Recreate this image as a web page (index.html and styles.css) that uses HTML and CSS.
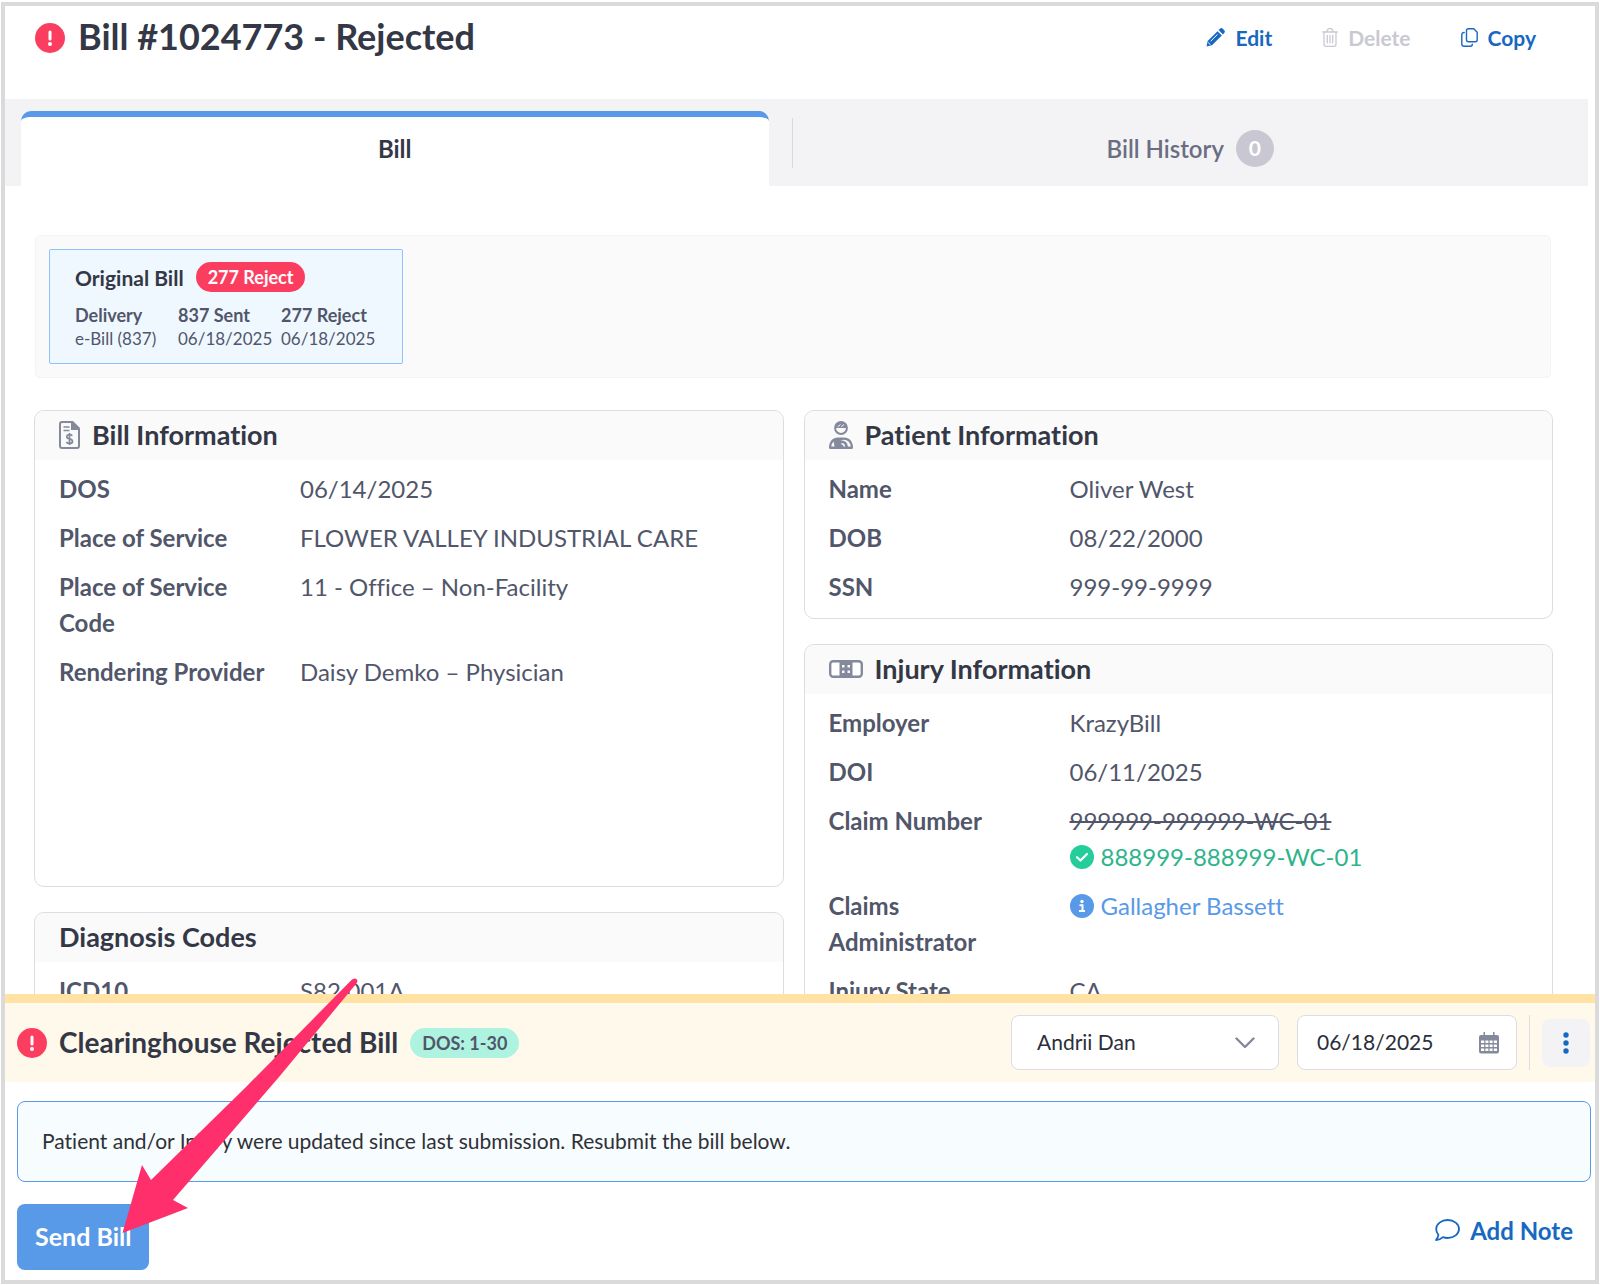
FILE: index.html
```html
<!DOCTYPE html>
<html lang="en">
<head>
    <meta charset="UTF-8">
    <meta name="viewport" content="width=device-width, initial-scale=1.0">
    <title>Bill #1024773 - Rejected</title>
    <link rel="stylesheet" href="styles.css">
</head>
<body>

    <div class="page">
        <header class="page-header">
            <svg class="alert-icon" viewBox="0 0 30 30">
                <circle cx="15" cy="15" r="15" fill="#fb3e5f"/>
                <path d="M15 9v7" stroke="#fff" stroke-width="3" stroke-linecap="round"/>
                <circle cx="15" cy="21" r="2" fill="#fff"/>
            </svg>
            <h1>Bill #1024773 - Rejected</h1>
            <div class="header-actions">
                <button type="button" class="link-btn">
                    <svg width="19" height="19" viewBox="0 0 19 19" fill="currentColor">
                        <path d="M11.500 3.200 15.800 7.500 6 17.200 0.500 18.500 1.700 12.900z"/>
                        <path d="M12.600 2.100 14 .8a2 2 0 0 1 2.800 0l1.400 1.400a2 2 0 0 1 0 2.800L16.900 6.400z"/>
                        <path d="M4.700 13.200 11.600 6.300M2.200 14.500l2.300 2.300" stroke="#fff" stroke-width="1"/>
                    </svg>
                    Edit
                </button>
                <button type="button" class="link-btn" disabled>
                    <svg width="16" height="19" viewBox="0 0 16 19" fill="none" stroke="currentColor" stroke-width="1.300" stroke-linecap="round">
                        <path d="M.7 4h14.600M4.500 4l1.300-2.500q.4-.8 1.200-.8h2q.8 0 1.200.8L11.500 4M2 4v12.300q0 2 2 2h8q2 0 2-2V4M5.300 7.300v7.500M8 7.300v7.500M10.700 7.300v7.500"/>
                    </svg>
                    Delete
                </button>
                <button type="button" class="link-btn">
                    <svg width="17" height="19" viewBox="0 0 17 19" fill="none" stroke="currentColor" stroke-width="1.400" stroke-linecap="round">
                        <path d="M7.500.8h5.200l3.500 3.400v7.600q0 2-2 2H7.500q-2 0-2-2v-9q0-2 2-2z"/>
                        <path d="M3.200 4.500q-2.400 0-2.400 2.200v9.200q0 2.300 2.300 2.300h6q2.200 0 2.200-2"/>
                    </svg>
                    Copy
                </button>
            </div>
        </header>

        <main class="content">
            <nav class="tabs">
                <a href="#bill" class="tab active">Bill</a>
                <span class="tab-divider"></span>
                <a href="#history" class="tab">Bill History <span class="count">0</span></a>
            </nav>

            <!-- Submissions of this bill -->
            <section class="submissions">
                <div class="submission">
                    <h3>Original Bill <span class="badge badge-reject">277 Reject</span></h3>
                    <dl class="submission-dates">
                        <div><dt>Delivery</dt><dd>e-Bill (837)</dd></div>
                        <div><dt>837 Sent</dt><dd>06/18/2025</dd></div>
                        <div><dt>277 Reject</dt><dd>06/18/2025</dd></div>
                    </dl>
                </div>
            </section>

            <div class="columns">
                <div class="column">
                    <section class="card card-bill">
                        <h2>
                            <svg width="21" height="28" viewBox="0 0 21 28" fill="none" stroke="#85899c" stroke-width="2">
                                <path d="M3 1h10.500L20 7.500V25q0 2-2 2H3q-2 0-2-2V3q0-2 2-2z"/>
                                <path d="M13 1v7h7z" fill="#85899c"/>
                                <path d="M4.500 6h6M4.500 9.500h6" stroke-width="1.500"/>
                                <path d="M13.300 14.800q-1-1.100-2.800-1.100-2.700 0-2.700 2 0 1.600 2.700 2.200 3 .6 3 2.500 0 2-3 2-2 0-3.200-1.300M10.500 12v12" stroke-width="1.700"/>
                            </svg>
                            Bill Information
                        </h2>
                        <dl class="fields">
                            <dt>DOS</dt>
                            <dd>06/14/2025</dd>
                            <dt>Place of Service</dt>
                            <dd>FLOWER VALLEY INDUSTRIAL CARE</dd>
                            <dt>Place of Service Code</dt>
                            <dd>11 - Office – Non-Facility</dd>
                            <dt>Rendering Provider</dt>
                            <dd>Daisy Demko – Physician</dd>
                        </dl>
                    </section>

                    <section class="card">
                        <h2>Diagnosis Codes</h2>
                        <dl class="fields">
                            <dt>ICD10</dt>
                            <dd>S82.001A</dd>
                        </dl>
                    </section>
                </div>

                <div class="column">
                    <section class="card">
                        <h2>
                            <svg width="24" height="28" viewBox="0 0 24 28" fill="none">
                                <circle cx="12" cy="7" r="5.900" stroke="#85899c" stroke-width="2"/>
                                <path d="M6 7V5q2.500-4 6-4t6 4v2z" fill="#85899c"/>
                                <path d="M8.800 5.800l2.700-2.300M12.300 5.800 15 3.500" stroke="#fafafa" stroke-width="1"/>
                                <path d="M0 26.500C0 20.500 3.800 16.500 9 16.500h6c5.200 0 9 4 9 10q0 1.500-1.500 1.500h-21Q0 28 0 26.500z" fill="#85899c"/>
                                <path d="M2.300 25.500q.2-3 2.300-5l1 5z" fill="#fafafa"/>
                                <path d="M11.500 19.200q6.500 0 7.500 6.300h2.700q-1-6.800-7-6.800z" fill="#fafafa"/>
                                <path d="M12.500 22.700q2.500 0 3 2.800" stroke="#fafafa" stroke-width="1.500"/>
                            </svg>
                            Patient Information
                        </h2>
                        <dl class="fields">
                            <dt>Name</dt>
                            <dd>Oliver West</dd>
                            <dt>DOB</dt>
                            <dd>08/22/2000</dd>
                            <dt>SSN</dt>
                            <dd>999-99-9999</dd>
                        </dl>
                    </section>

                    <section class="card">
                        <h2>
                            <svg width="34" height="18" viewBox="0 0 34 18">
                                <rect x="1.200" y="1.200" width="31.600" height="15.600" rx="3" fill="#fff" stroke="#85899c" stroke-width="2.400"/>
                                <path d="M10.500 1h13v16h-13z" fill="#85899c"/>
                                <path d="M13 5h2.500v2.500H13zM18.500 5H21v2.500h-2.500zM13 10.500h2.500V13H13zM18.500 10.500H21V13h-2.500z" fill="#fafafa"/>
                            </svg>
                            Injury Information
                        </h2>
                        <dl class="fields">
                            <dt>Employer</dt>
                            <dd>KrazyBill</dd>
                            <dt>DOI</dt>
                            <dd>06/11/2025</dd>
                            <dt>Claim Number</dt>
                            <dd>
                                <s>999999-999999-WC-01</s>
                                <span class="claim-new">
                                    <svg width="24" height="24" viewBox="0 0 24 24" fill="none">
                                        <circle cx="12" cy="12" r="12" fill="#25cd9b"/>
                                        <path d="M7 12.200l3.500 3.300L17 9" stroke="#fff" stroke-width="2.200" stroke-linecap="round" stroke-linejoin="round"/>
                                    </svg>
                                    888999-888999-WC-01
                                </span>
                            </dd>
                            <dt>Claims Administrator</dt>
                            <dd>
                                <a href="#administrator" class="administrator">
                                    <svg width="24" height="24" viewBox="0 0 24 24">
                                        <circle cx="12" cy="12" r="12" fill="#5899e8"/>
                                        <circle cx="12" cy="7.500" r="1.700" fill="#fff"/>
                                        <path d="M9.500 11.300h3V17M9 17h6" fill="none" stroke="#fff" stroke-width="2"/>
                                    </svg>
                                    Gallagher Bassett
                                </a>
                            </dd>
                            <dt>Injury State</dt>
                            <dd>CA</dd>
                        </dl>
                    </section>
                </div>
            </div>
        </main>

        <!-- Task panel -->
        <footer class="task">
            <div class="task-bar">
                <svg class="alert-icon" viewBox="0 0 30 30">
                    <circle cx="15" cy="15" r="15" fill="#fb3e5f"/>
                    <path d="M15 9v7" stroke="#fff" stroke-width="3" stroke-linecap="round"/>
                    <circle cx="15" cy="21" r="2" fill="#fff"/>
                </svg>
                <h2>Clearinghouse Rejected Bill</h2>
                <span class="badge badge-dos">DOS: 1-30</span>

                <div class="task-controls">
                    <div class="field-box assignee">
                        <select aria-label="Assignee">
                            <option>Andrii Dan</option>
                        </select>
                        <svg width="20" height="12" viewBox="0 0 20 12" fill="none" stroke="#85899c" stroke-width="2.400" stroke-linecap="round" stroke-linejoin="round">
                            <path d="M1.500 1.500 10 10l8.500-8.500"/>
                        </svg>
                    </div>
                    <div class="field-box due-date">
                        <input type="text" aria-label="Due date" value="06/18/2025">
                        <svg width="20" height="22" viewBox="0 0 20 22">
                            <path d="M2 3h16q2 0 2 2v14.500q0 2-2 2H2q-2 0-2-2V5q0-2 2-2zM4.500 0h1.500v4H4.500zM14 0h1.500v4H14z" fill="#85899c"/>
                            <path d="M2 8.500h3.200V11H2zM6.400 8.500h3V11h-3zM10.600 8.500h3V11h-3zM14.800 8.500H18V11h-3.200zM2 12.500h3.200V15H2zM6.400 12.500h3V15h-3zM10.600 12.500h3V15h-3zM14.800 12.500H18V15h-3.200zM2 16.500h3.200V19H2zM6.400 16.500h3V19h-3zM10.600 16.500h3V19h-3zM14.800 16.500H18V19h-3.200z" fill="#fff"/>
                        </svg>
                    </div>
                    <span class="controls-divider"></span>
                    <button type="button" class="more-btn" aria-label="More actions">
                        <svg width="6" height="22" viewBox="0 0 6 22" fill="#1668c0">
                            <circle cx="3" cy="3" r="2.700"/>
                            <circle cx="3" cy="11" r="2.700"/>
                            <circle cx="3" cy="19" r="2.700"/>
                        </svg>
                    </button>
                </div>
            </div>

            <p class="notice">Patient and/or Injury were updated since last submission. Resubmit the bill below.</p>

            <div class="task-actions">
                <button type="button" class="send-btn">Send Bill</button>
                <button type="button" class="link-btn note-btn">
                    <svg width="25" height="22" viewBox="0 0 25 22" fill="none" stroke="currentColor" stroke-width="1.800" stroke-linejoin="round">
                        <path d="M12.700 1C19 1 24 5 24 10s-5 9-11.300 9q-2.500 0-4.700-.8Q5 21 1 21q2-2.300 2.400-5.200Q1.200 13.300 1.200 10C1.200 5 6.400 1 12.700 1z"/>
                    </svg>
                    Add Note
                </button>
            </div>

            <!-- Arrow pointing at the send button -->
            <svg class="arrow" width="240" height="260" viewBox="120 976 240 260">
                <path d="M122.500 1233 142 1165l9 15L246 1087 351 980.500q3-3 5.500-1.500 2 2-.5 5L279 1077 173 1200l15 8z" fill="#ff2f6b"/>
            </svg>
        </footer>
    </div>

</body>
</html>
```
FILE: styles.css
```css
* {
    box-sizing: border-box;
}

body {
    margin: 0;
    padding: 2px 1px 1px;
    height: 100vh;
    font-family: Lato, "Open Sans", sans-serif;
    font-size: 24px;
    font-variant-ligatures: none;
    color: #51566a;
    background-color: #fff;
}

h1, h2, h3, p, dl, dd {
    margin: 0;
}

h1, h2, h3 {
    color: #343846;
    font-weight: 700;
}

button, select, input {
    font-family: inherit;
}

svg {
    flex: none;
}

.page {
    display: flex;
    flex-direction: column;
    height: 100%;
    border: 4px solid #dadada;
}

/* Header */
.page-header {
    display: flex;
    align-items: center;
    gap: 13px;
    padding: 8px 59px 37px 30px;
}

.alert-icon {
    width: 30px;
    height: 30px;
}

h1 {
    padding-bottom: 4px;
    font-size: 36px;
    line-height: 44px;
}

.header-actions {
    display: flex;
    gap: 50px;
    margin-left: auto;
}

.link-btn {
    display: flex;
    align-items: center;
    gap: 10px;
    padding: 0 0 2px;
    border: none;
    background: none;
    color: #1668c0;
    font-size: 21px;
    font-weight: 700;
    cursor: pointer;
}

.link-btn:disabled {
    color: #c9c9d2;
    cursor: default;
}

.content {
    flex: 1;
    min-height: 0;
    overflow: hidden;
    padding-right: 7px;
}

/* Tabs */
.tabs {
    display: grid;
    grid-template-columns: calc(50% - 5px) 1px 1fr;
    align-items: center;
    background-color: #f3f3f5;
}

.tab {
    display: flex;
    align-items: center;
    justify-content: center;
    gap: 12px;
    height: 87px;
    padding-top: 12px;
    color: #6b6e82;
    font-size: 24px;
    font-weight: 600;
    text-decoration: none;
}

.tab.active {
    height: 75px;
    margin: 12px 23px 0 16px;
    padding-bottom: 6px;
    padding-top: 0;
    border-top: 6px solid #5899e8;
    border-radius: 10px 10px 0 0;
    background-color: #fff;
    color: #343846;
    font-weight: 700;
}

.tab-divider {
    height: 50px;
    background-color: #d9d9e0;
}

.count {
    width: 38px;
    height: 37px;
    border-radius: 50%;
    background-color: #c9c8d2;
    color: #fff;
    font-size: 21px;
    font-weight: 700;
    line-height: 36px;
    text-align: center;
}

/* Submissions */
.submissions {
    margin: 49px 37px 32px 30px;
    padding: 13px;
    border: 1px solid #f4f4f4;
    border-radius: 5px;
    background-color: #fafafa;
}

.submission {
    width: fit-content;
    padding: 12px 18px 13px 25px;
    border: 1px solid #8fc1fa;
    border-radius: 2px;
    background-color: #f0f8ff;
}

.submission h3 {
    display: flex;
    align-items: center;
    gap: 12px;
    margin-bottom: 12px;
    font-size: 21px;
}

.submission-dates {
    display: flex;
    font-size: 17px;
    line-height: 23px;
}

.submission-dates div {
    width: 103px;
}

.submission-dates dt {
    font-size: 18px;
}

dt {
    font-weight: 700;
}

.badge {
    padding: 0 12px;
    border-radius: 15px;
    font-size: 18px;
    font-weight: 700;
    line-height: 30px;
}

.badge-reject {
    background-color: #fb3e5f;
    color: #fff;
}

.badge-dos {
    background-color: #aef3df;
    color: #51566a;
}

/* Cards */
.columns {
    display: grid;
    grid-template-columns: 1fr 1fr;
    gap: 20px;
    padding: 0 35px 0 29px;
}

.column {
    display: flex;
    flex-direction: column;
    gap: 25px;
}

.card {
    border: 1px solid #dcdce3;
    border-radius: 10px;
}

.card-bill {
    min-height: 477px;
}

.card h2 {
    display: flex;
    align-items: center;
    gap: 12px;
    height: 49px;
    padding: 0 24px 2px;
    border-radius: 10px 10px 0 0;
    background-color: #fafafa;
    font-size: 27px;
}

.fields {
    display: grid;
    grid-template-columns: 217px 1fr;
    gap: 13px 24px;
    padding: 11px 24px 13px;
    line-height: 36px;
}

.claim-new, .administrator {
    display: flex;
    align-items: center;
    gap: 7px;
}

.claim-new {
    color: #2eb48c;
}

.administrator {
    color: #5899e8;
    text-decoration: none;
}

/* Task panel */
.task {
    position: relative;
    border-top: 9px solid #ffe2a4;
}

.task-bar {
    display: flex;
    align-items: center;
    gap: 12px;
    padding: 12px 5px 12px 12px;
    background-color: #fff9eb;
}

.task-bar h2 {
    padding-bottom: 2px;
    font-size: 28px;
}

.task-controls {
    display: flex;
    align-items: center;
    gap: 12px;
    margin-left: auto;
}

.field-box {
    position: relative;
    height: 55px;
}

.field-box select, .field-box input {
    width: 100%;
    height: 100%;
    padding: 0 25px 2px;
    border: 1px solid #dcdce3;
    border-radius: 8px;
    background-color: #fff;
    color: #2b2e3b;
    font-size: 21px;
    appearance: none;
}

.field-box input {
    padding: 0 19px 2px;
}

.field-box svg {
    position: absolute;
    top: 50%;
    right: 24px;
    transform: translateY(-50%);
    pointer-events: none;
}

.due-date svg {
    right: 18px;
}

.assignee {
    width: 268px;
    margin-right: 6px;
}

.due-date {
    width: 220px;
}

.controls-divider {
    width: 1px;
    height: 55px;
    background-color: #dcdce3;
}

.more-btn {
    display: flex;
    align-items: center;
    justify-content: center;
    width: 48px;
    height: 48px;
    border: none;
    border-radius: 8px;
    background-color: #f3f3f6;
    cursor: pointer;
}

.notice {
    margin: 19px 4px 22px 12px;
    padding: 23px 24px 25px;
    border: 1px solid #5899e8;
    border-radius: 8px;
    background-color: #f7fcff;
    color: #2f3136;
    font-size: 21px;
    line-height: 31px;
}

.task-actions {
    display: flex;
    align-items: flex-start;
    justify-content: space-between;
    padding: 0 22px 10px 12px;
}

.send-btn {
    height: 66px;
    padding: 0 18px 2px;
    border: none;
    border-radius: 8px;
    background-color: #5899e8;
    color: #fff;
    font-size: 25px;
    font-weight: 700;
    cursor: pointer;
}

.note-btn {
    height: 54px;
    font-size: 24px;
}

.arrow {
    position: absolute;
    bottom: 44px;
    left: 115px;
    pointer-events: none;
}
```
